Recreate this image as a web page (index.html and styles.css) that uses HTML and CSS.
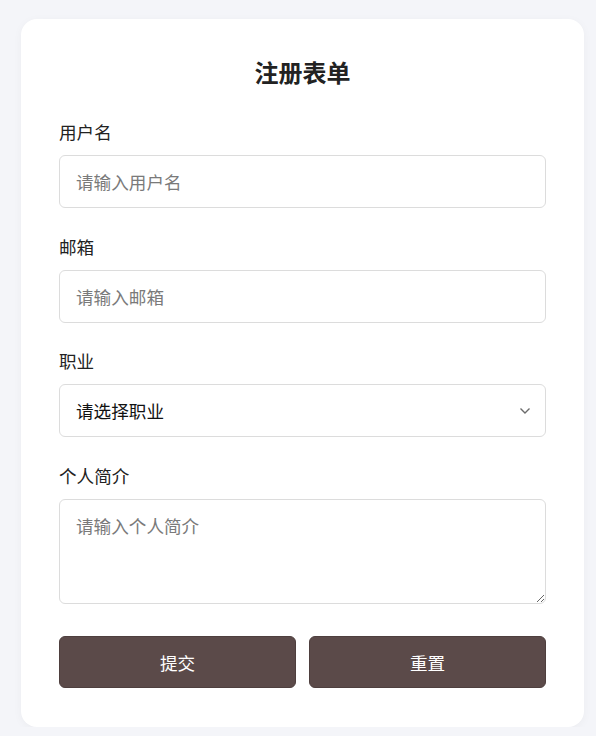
FILE: index.html
```html
<!DOCTYPE html>
<html lang="zh-CN">
<head>
    <meta charset="UTF-8">
    <meta name="viewport" content="width=device-width, initial-scale=1.0">
    <title>注册表单</title>
    <link rel="stylesheet" href="styles.css">
</head>
<body>
    <div class="card">
        <h1>注册表单</h1>
        <form>
            <div class="campo">
                <label for="usuario">用户名</label>
                <input type="text" id="usuario" placeholder="请输入用户名">
            </div>
            <div class="campo">
                <label for="correo">邮箱</label>
                <input type="email" id="correo" placeholder="请输入邮箱">
            </div>
            <div class="campo">
                <label for="oficio">职业</label>
                <div class="selector">
                    <select id="oficio">
                        <option value="">请选择职业</option>
                        <option value="dev">开发者</option>
                        <option value="design">设计师</option>
                        <option value="other">其他</option>
                    </select>
                    <!-- flecha del select -->
                    <svg class="flecha" width="12" height="8" viewBox="0 0 12 8">
                        <path d="M1.5 1.5 L6 6 L10.5 1.5" fill="none" stroke="#6b6b6b" stroke-width="1.4"/>
                    </svg>
                </div>
            </div>
            <div class="campo">
                <label for="bio">个人简介</label>
                <textarea id="bio" placeholder="请输入个人简介"></textarea>
            </div>
            <div class="botones">
                <button type="submit">提交</button>
                <button type="reset">重置</button>
            </div>
        </form>
    </div>
</body>
</html>
```
FILE: styles.css
```css
body {
    font-family: "Noto Sans CJK SC", "Noto Sans", sans-serif;
    background: #f4f5f9;
    color: #222;
    margin: 0;
    padding: 19px 12px 0 21px;
}

.card {
    background: #fff;
    border-radius: 16px;
    padding: 38px 38px 39px;
    box-shadow: 0 2px 10px rgba(0, 0, 0, 0.04);
}

h1 {
    margin: 0 0 33px;
    text-align: center;
    font-size: 24px;
    line-height: 30px;
    font-weight: bold;
    color: #222;
}

.campo {
    margin-bottom: 26.5px;
}

.campo label {
    display: block;
    font-size: 17.6px;
    line-height: 24px;
    margin-bottom: 11px;
    color: #222;
}

input, select, textarea {
    display: block;
    width: 100%;
    box-sizing: border-box;
    font-family: inherit;
    font-size: 17.6px;
    line-height: 23px;
    border: 1px solid #dcdcdc;
    border-radius: 6px;
    padding: 14px 16px;
    color: #111;
    background: #fff;
    margin: 0;
}

input {
    height: 53px;
}

input::placeholder, textarea::placeholder {
    color: #7a7a7a;
}

.selector {
    position: relative;
}

select {
    height: 53px;
    padding: 0 40px 0 16px;
    appearance: none;
    -webkit-appearance: none;
}

.flecha {
    position: absolute;
    right: 15px;
    top: 23px;
    pointer-events: none;
}

textarea {
    height: 105px;
    resize: vertical;
}

.botones {
    display: flex;
    gap: 13px;
    margin-top: 32.5px;
}

.botones button {
    flex: 1;
    height: 52px;
    background: #5b4a49;
    color: #fff;
    border: 1px solid #4e3f3e;
    border-radius: 6px;
    font-family: inherit;
    font-size: 17.6px;
    cursor: pointer;
}

.botones button:hover {
    background: #4d3e3d;
}
```
